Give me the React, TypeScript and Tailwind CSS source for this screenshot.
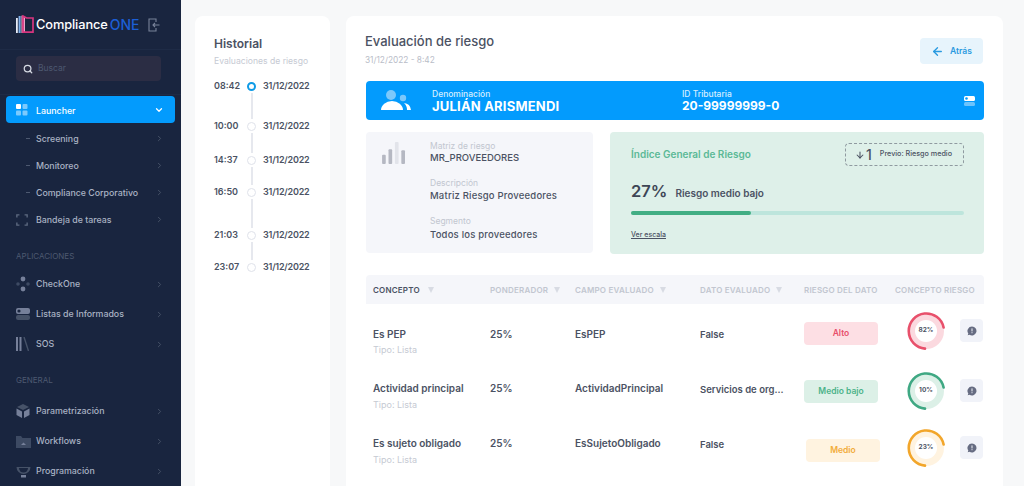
import React from "react";
import { ChevronRight, ChevronDown, Search, ArrowLeft, ArrowDown } from "lucide-react";

function Logo() {
  return (
    <svg width="18" height="20" viewBox="0 0 18 20" className="shrink-0">
      <rect x="0" y="3" width="1.8" height="15" fill="#e6ebf7" />
      <rect x="2.6" y="1" width="2" height="17" fill="#7fb0ea" />
      <path d="M5.4 0.5 L9 2.5 V18 H5.4 Z" fill="#e9a5c9" />
      <path d="M7 1 L10.5 3 H17 V17.2 H7 Z" fill="none" stroke="#d6357f" strokeWidth="1.7" />
    </svg>
  );
}

function NavIcon({ kind }: { kind: string }) {
  const c = "#5d6980";
  if (kind === "frame")
    return (
      <svg width="12" height="12" viewBox="0 0 14 14" fill="none" stroke={c} strokeWidth="1.6">
        <path d="M1 4V1h3M10 1h3v3M13 10v3h-3M4 13H1v-3" />
      </svg>
    );
  if (kind === "check")
    return (
      <svg width="14" height="16" viewBox="0 0 14 16" fill={c}>
        <circle cx="7" cy="3" r="2.4" fill="#76809a" />
        <circle cx="7" cy="13" r="2.4" fill="#76809a" />
        <circle cx="2" cy="8" r="1.8" fill="#3d4a63" />
        <circle cx="12" cy="8" r="1.8" fill="#3d4a63" />
      </svg>
    );
  if (kind === "toggle")
    return (
      <svg width="14" height="14" viewBox="0 0 14 14">
        <rect y="1" width="14" height="6" rx="2" fill="#76809a" />
        <circle cx="3" cy="4" r="1.6" fill="#19253f" />
        <rect y="8" width="14" height="5" rx="2" fill="#465268" />
      </svg>
    );
  if (kind === "books")
    return (
      <svg width="14" height="14" viewBox="0 0 14 14">
        <rect x="0" y="0" width="2" height="14" fill="#76809a" />
        <rect x="3.5" y="0" width="2" height="14" fill="#76809a" />
        <path d="M8 0 L12.5 14" stroke="#465268" strokeWidth="1.4" />
      </svg>
    );
  if (kind === "box")
    return (
      <svg width="14" height="14" viewBox="0 0 14 14">
        <path d="M7 0 L13 3 L7 6 L1 3 Z" fill="#465268" />
        <path d="M0.5 4.5 L6 7.5 V14 L0.5 11 Z" fill="#76809a" />
        <path d="M13.5 4.5 L8 7.5 V14 L13.5 11 Z" fill="#76809a" />
      </svg>
    );
  if (kind === "folder")
    return (
      <svg width="15" height="13" viewBox="0 0 15 13">
        <path d="M0 1 H5 L6.5 3 H15 V13 H0 Z" fill="#3d4a63" />
        <path d="M5 10 L7.5 7.5 L10 10 Z" fill="#76809a" />
      </svg>
    );
  return (
    <svg width="15" height="14" viewBox="0 0 15 14">
      <path d="M0.5 3 H14.5 A7 7 0 0 1 0.5 3 Z" fill="#465268" />
      <rect x="5" y="11" width="5" height="2.5" fill="#76809a" />
      <path d="M3 4 H12 A4.5 4.5 0 0 1 3 4Z" fill="#19253f" />
    </svg>
  );
}

function NavRow({ icon, label, sub, h = "h-[30px]" }: { icon?: string; label: string; sub?: boolean; h?: string }) {
  return (
    <div className={`flex items-center pl-4 pr-[17px] ${h}`}>
      <div className="w-[20px] flex justify-start shrink-0">
        {icon && <NavIcon kind={icon} />}
        {sub && <span className="ml-[10px] w-[4px] h-px bg-[#4d5970]" />}
      </div>
      <span className="text-[8.8px] font-medium text-[#aab3c4] flex-1 whitespace-nowrap">{label}</span>
      <ChevronRight size={9} className="text-[#465268]" strokeWidth={2.5} />
    </div>
  );
}

function Sidebar() {
  return (
    <aside className="w-[181px] shrink-0 bg-[#19253f] flex flex-col">
      <div className="h-[50px] flex items-center pl-4 pr-[21px] border-b border-[#1e2b46]">
        <Logo />
        <span className="ml-[2px] text-[12.8px] font-medium text-white tracking-[-0.1px]">Compliance</span>
        <span className="ml-[2px] text-[14px] font-medium text-[#1c5fd6]">ONE</span>
        <svg width="12" height="14" viewBox="0 0 12 14" fill="none" stroke="#78839a" strokeWidth="1.1" className="ml-auto">
          <path d="M8 4V1H1v12h7v-3" />
          <path d="M11.5 7H5M7 5L5 7l2 2" />
        </svg>
      </div>
      <div className="h-[45px] mx-0 border-b border-[#1e2b46] px-4 pt-[6px]">
        <div className="h-[25px] w-[145px] rounded bg-[#2b2d44] flex items-center pl-[7px]">
          <Search size={10} strokeWidth={3} className="text-[#d5d9e2]" />
          <span className="ml-[5px] text-[8.5px] text-[#4d5870]">Buscar</span>
        </div>
      </div>
      <div className="mt-[1px] mx-[6px] h-[27px] rounded bg-[#039bfd] flex items-center pl-[10px] pr-[11px]">
        <svg width="12" height="12" viewBox="0 0 12 12" className="shrink-0">
          <rect width="5" height="5" rx="1" fill="#fff" />
          <rect x="6.5" width="5" height="5" rx="1" fill="#7ccafd" />
          <rect y="6.5" width="5" height="5" rx="1" fill="#7ccafd" />
          <rect x="6.5" y="6.5" width="5" height="5" rx="1" fill="#7ccafd" />
        </svg>
        <span className="ml-[8px] flex-1 pt-[2px] text-[8.8px] font-medium text-white">Launcher</span>
        <ChevronDown size={10} strokeWidth={3} className="text-white" />
      </div>
      <div className="mt-[1px] flex flex-col">
        <NavRow sub label="Screening" h="h-[27px] mt-[1px]" />
        <NavRow sub label="Monitoreo" h="h-[27px]" />
        <NavRow sub label="Compliance Corporativo" h="h-[27px]" />
        <NavRow icon="frame" label="Bandeja de tareas" h="h-[27px]" />
      </div>
      <div className="mt-[17px] pl-4 text-[8px] text-[#4d5970] h-[12px] leading-[12px]">APLICACIONES</div>
      <div className="mt-[7px] flex flex-col">
        <NavRow icon="check" label="CheckOne" />
        <NavRow icon="toggle" label="Listas de Informados" />
        <NavRow icon="books" label="SOS" />
      </div>
      <div className="mt-[15px] pl-4 text-[8px] text-[#4d5970] h-[12px] leading-[12px]">GENERAL</div>
      <div className="mt-[10px] flex flex-col">
        <NavRow icon="box" label="Parametrización" />
        <NavRow icon="folder" label="Workflows" />
        <NavRow icon="dish" label="Programación" />
      </div>
    </aside>
  );
}

const history = [
  { t: "08:42", gap: 26, active: true },
  { t: "10:00", gap: 20 },
  { t: "14:37", gap: 18 },
  { t: "16:50", gap: 29 },
  { t: "21:03", gap: 18 },
  { t: "23:07", gap: 0 },
];

function Historial() {
  return (
    <section className="w-[135px] shrink-0 ml-[14px] mt-[16px] bg-white rounded-t-lg pt-[21px] pl-[19px]">
      <h2 className="text-[12px] leading-[14px] font-semibold text-[#4b5263]">Historial</h2>
      <div className="mt-[4px] text-[8.6px] leading-[12px] text-[#c6cad3] whitespace-nowrap">Evaluaciones de riesgo</div>
      <div className="mt-[12px] flex flex-col">
        {history.map((h) => (
          <div key={h.t} className="flex flex-col">
            <div className="flex items-center h-[14px] text-[#4b5263] text-[9px] font-semibold">
              <span className="w-[33px]">{h.t}</span>
              <span
                className={
                  h.active
                    ? "w-[9px] h-[9px] rounded-full border-2 border-[#0f9be6] bg-white"
                    : "w-[9px] h-[9px] rounded-full border border-[#dfe2ea] bg-white"
                }
              />
              <span className="ml-[7px] tracking-[-0.2px]">31/12/2022</span>
            </div>
            {h.gap > 0 && (
              <div className="flex" style={{ height: h.gap }}>
                <span className="ml-[37px] w-[1.5px] h-full bg-[#e6e8ee]" />
              </div>
            )}
          </div>
        ))}
      </div>
    </section>
  );
}

function Donut({ pct, color, track }: { pct: string; color: string; track: string }) {
  return (
    <div className="relative w-[38px] h-[38px]">
      <svg width="38" height="38" viewBox="0 0 38 38">
        <circle cx="19" cy="19" r="14" fill="none" stroke={track} strokeWidth="8" />
        <circle cx="19" cy="19" r="11" fill="#fff" />
        <path d="M36.6 15.5 A17.6 17.6 0 1 0 18 36.6" fill="none" stroke={color} strokeWidth="2.6" strokeLinecap="round" />
      </svg>
      <span className="absolute inset-0 flex items-center justify-center text-[6.5px] font-bold text-[#4b5263]">{pct}</span>
    </div>
  );
}

function Tri() {
  return <span className="inline-block ml-[6px] w-0 h-0 border-x-[3.5px] border-x-transparent border-t-[6px] border-t-[#d8dbe3]" />;
}

const rows = [
  { n: "Es PEP", c: "EsPEP", d: "False", chip: "Alto", chipCls: "bg-[#fddfe4] text-[#e8506b]", pct: "82%", col: "#e8506b", tr: "#fbd9df", name: "mt-[7px]", tipo: "mt-[3px]", chipTop: "pt-[2px]", dTop: "-mt-[8px]" },
  { n: "Actividad principal", c: "ActividadPrincipal", d: "Servicios de org...", chip: "Medio bajo", chipCls: "bg-[#dcf0e7] text-[#4cb38a]", pct: "10%", col: "#3fa883", tr: "#dcf0e7", name: "mt-[6px]", tipo: "mt-[4px]", chipTop: "pt-[5px]", dTop: "-mt-[3px]" },
  { n: "Es sujeto obligado", c: "EsSujetoObligado", d: "False", chip: "Medio", chipCls: "bg-[#fff3e0] text-[#f2ac3a] translate-x-[2px]", pct: "23%", col: "#f2a62b", tr: "#fff3e0", name: "mt-[6px]", tipo: "mt-[4px]", chipTop: "pt-[9px]", dTop: "-mt-[1px]" },
];

function Table() {
  return (
    <div className="mt-[21px]">
      <div className="h-[29px] rounded-t bg-[#f5f6fa] grid grid-cols-[117px_85px_125px_104px_91px_96px] pl-[7px] items-center text-[8px] tracking-[0.2px] font-semibold text-[#c2c6d0] whitespace-nowrap">
        <span className="text-[#4b5263] flex items-center">CONCEPTO<span className="ml-[2px]"><Tri /></span></span>
        <span className="flex items-center">PONDERADOR<Tri /></span>
        <span className="flex items-center">CAMPO EVALUADO<Tri /></span>
        <span className="flex items-center">DATO EVALUADO<Tri /></span>
        <span>RIESGO DEL DATO</span>
        <span>CONCEPTO RIESGO</span>
      </div>
      <div className="mt-[16px] flex flex-col gap-[20px]">
        {rows.map((r) => (
          <div key={r.n} className="h-[35px] grid grid-cols-[117px_85px_125px_104px_91px_96px] pl-[7px] text-[10px] font-semibold text-[#4b5263] whitespace-nowrap">
            <div>
              <div className={`leading-[14px] ${r.name}`}>{r.n}</div>
              <div className={`${r.tipo} text-[9px] leading-[12px] font-normal text-[#c6cad3]`}>Tipo: Lista</div>
            </div>
            <div className={`leading-[14px] ${r.name}`}>25%</div>
            <div className={`leading-[14px] ${r.name}`}>{r.c}</div>
            <div className="leading-[14px] mt-[8px] text-[9.5px]">{r.d}</div>
            <div className={r.chipTop}>
              <div className={`w-[74px] h-[23px] rounded flex items-center justify-center text-[8.5px] font-semibold ${r.chipCls}`}>{r.chip}</div>
            </div>
            <div className={`flex items-start pl-[12px] ${r.dTop}`}>
              <Donut pct={r.pct} color={r.col} track={r.tr} />
              <div className="ml-[15px] mt-[7px] w-[23px] h-[23px] rounded bg-[#f1f3f9] flex items-center justify-center">
                <svg width="10" height="10" viewBox="0 0 10 10">
                  <path d="M5 0.5a4.5 4.5 0 1 1-2.6 8.2L0.7 9.3l0.6-1.7A4.5 4.5 0 0 1 5 0.5Z" fill="#666c82" />
                  <rect x="4.5" y="2.4" width="1" height="3" fill="#f1f3f9" />
                  <rect x="4.5" y="6.2" width="1" height="1" fill="#f1f3f9" />
                </svg>
              </div>
            </div>
          </div>
        ))}
      </div>
    </div>
  );
}

function Main() {
  return (
    <section className="w-[657px] shrink-0 ml-[16px] mt-[16px] bg-white rounded-t-lg pt-[17px] pl-[20px] pr-[19px] overflow-hidden">
      <div className="flex justify-between items-start">
        <div className="-ml-[1px]">
          <h1 className="text-[13px] leading-[16px] font-medium text-[#4b5263]">Evaluación de riesgo</h1>
          <div className="mt-[6px] text-[8.3px] leading-[10px] text-[#b9bdc8]">31/12/2022 - 8:42</div>
        </div>
        <div className="mt-[5px] mr-[1px] w-[63px] h-[26px] rounded bg-[#e7f4fc] flex items-center justify-center gap-[6px] text-[8.5px] font-semibold text-[#2a9ae0]">
          <ArrowLeft size={13} strokeWidth={2.5} />
          <span>Atrás</span>
        </div>
      </div>
      <div className="mt-[16px] h-[39px] rounded bg-[#039bfd] flex items-center pl-[15px] pr-[9px] text-white">
        <svg width="30" height="24" viewBox="0 0 30 24" className="shrink-0">
          <circle cx="10" cy="6" r="5" fill="#7cc8fb" />
          <circle cx="22" cy="9" r="3.2" fill="#7cc8fb" />
          <path d="M0 21 A11 9 0 0 1 22 21 Z" fill="#fff" />
          <path d="M23 14 A8 8 0 0 1 30 21 H26 A9 9 0 0 0 23 14 Z" fill="#fff" />
        </svg>
        <div className="ml-[21px] w-[250px]">
          <div className="text-[8.5px] leading-[10px] font-medium text-[#d5eeff]">Denominación</div>
          <div className="text-[13px] leading-[14px] font-bold tracking-[0.2px] whitespace-nowrap">JULIÁN ARISMENDI</div>
        </div>
        <div>
          <div className="text-[8.5px] leading-[10px] font-medium text-[#d5eeff]">ID Tributaria</div>
          <div className="text-[12px] leading-[14px] font-bold whitespace-nowrap">20-99999999-0</div>
        </div>
        <svg width="11" height="10" viewBox="0 0 11 10" className="ml-auto">
          <rect width="11" height="5" rx="1.5" fill="#fff" />
          <circle cx="2.5" cy="2.5" r="1.3" fill="#039bfd" />
          <rect y="6" width="11" height="4" rx="1.5" fill="#6cc3fc" />
        </svg>
      </div>
      <div className="mt-[12px] flex gap-[17px] h-[122px]">
        <div className="w-[227px] h-[121px] rounded bg-[#f5f6fa] flex pl-[15px] pt-[9px]">
          <svg width="26" height="22" viewBox="0 0 26 24" className="shrink-0 mt-[1px]">
            <rect x="0" y="14" width="4" height="10" rx="1" fill="#b5b8c2" />
            <rect x="7" y="8" width="4" height="16" rx="1" fill="#b5b8c2" />
            <rect x="14" y="0" width="4" height="24" rx="1" fill="#e2e4ea" />
            <rect x="21" y="9" width="4" height="15" rx="1" fill="#b5b8c2" />
          </svg>
          <div className="ml-[23px] flex flex-col">
            <div className="text-[8.5px] leading-[11px] text-[#c2c6d0]">Matriz de riesgo</div>
            <div className="text-[9.5px] leading-[12px] font-medium text-[#4b5263]">MR_PROVEEDORES</div>
            <div className="mt-[14px] text-[8.5px] leading-[11px] text-[#c2c6d0]">Descripción</div>
            <div className="text-[9.5px] leading-[14px] font-medium tracking-[0.2px] text-[#4b5263]">Matriz Riesgo Proveedores</div>
            <div className="mt-[13px] text-[8.5px] leading-[11px] text-[#c2c6d0]">Segmento</div>
            <div className="mt-[1px] text-[9.5px] leading-[14px] font-medium tracking-[0.2px] text-[#4b5263]">Todos los proveedores</div>
          </div>
        </div>
        <div className="w-[374px] rounded bg-[#def0e9] pl-[21px] pr-[20px] pt-[11px]">
          <div className="flex justify-between items-center">
            <span className="text-[10px] font-semibold text-[#5bb996]">Índice General de Riesgo</span>
            <div className="w-[119px] h-[23px] rounded border border-dashed border-[#8f9aa0] flex items-center pl-[9px]">
              <ArrowDown size={10} strokeWidth={2.5} className="text-[#4b5263]" />
              <span className="text-[14px] font-medium text-[#4b5263] ml-[1px]">1</span>
              <span className="ml-[8px] text-[7.2px] font-medium text-[#4b5263] whitespace-nowrap">Previo: Riesgo medio</span>
            </div>
          </div>
          <div className="mt-[13px] flex items-baseline">
            <span className="text-[16.5px] leading-[24px] font-semibold text-[#3d4555]">27%</span>
            <span className="ml-[8px] text-[10px] font-semibold text-[#4b5263]">Riesgo medio bajo</span>
          </div>
          <div className="mt-[8px] h-[4px] rounded-full bg-[#bde5dc]">
            <div className="h-full w-[120px] rounded-full bg-[#42ae84]" />
          </div>
          <div className="mt-[15px] text-[7px] font-medium text-[#4b5263] underline">Ver escala</div>
        </div>
      </div>
      <Table />
    </section>
  );
}

export default function App() {
  return (
    <div className="flex w-[1024px] h-[486px] overflow-hidden bg-[#f7f8f9] font-['Inter','Liberation_Sans',sans-serif]">
      <Sidebar />
      <Historial />
      <Main />
    </div>
  );
}
